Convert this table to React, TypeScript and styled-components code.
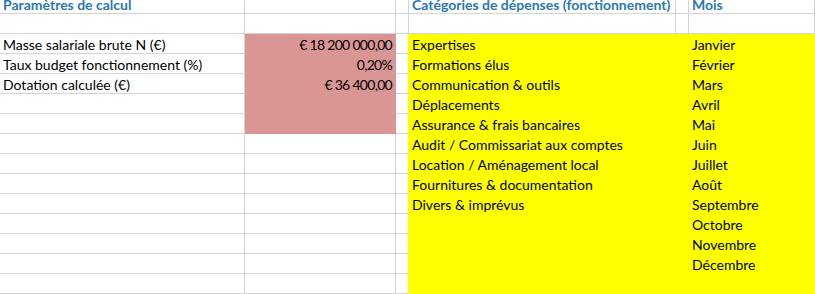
import styled, { createGlobalStyle } from "styled-components";

const GlobalStyle = createGlobalStyle`
  html, body {
    margin: 0;
    padding: 0;
    background: #fff;
    overflow: hidden;
  }
  body {
    font-family: Lato, "Open Sans", sans-serif;
    font-size: 14px;
    color: #000;
  }
`;

const PINK = "#DA9694";
const YELLOW = "#FFFF00";
const GRID = "#D4D4D4";

type Fill = "pink" | "yellow" | undefined;

const params = [
  ["Masse salariale brute N (€)", "€ 18 200 000,00"],
  ["Taux budget fonctionnement (%)", "0,20%"],
  ["Dotation calculée (€)", "€ 36 400,00"],
];

const categories = [
  "Expertises",
  "Formations élus",
  "Communication & outils",
  "Déplacements",
  "Assurance & frais bancaires",
  "Audit / Commissariat aux comptes",
  "Location / Aménagement local",
  "Fournitures & documentation",
  "Divers & imprévus",
];

const months = [
  "Janvier",
  "Février",
  "Mars",
  "Avril",
  "Mai",
  "Juin",
  "Juillet",
  "Août",
  "Septembre",
  "Octobre",
  "Novembre",
  "Décembre",
];

const App = () => {
  const rows = Array.from({ length: 13 }, (_, i) => i);

  return (
    <>
      <GlobalStyle />
      <Sheet>
        <Row>
          <Cell>
            <Heading>Paramètres de calcul</Heading>
          </Cell>
          <Cell />
          <Cell />
          <Cell>
            <Heading>Catégories de dépenses (fonctionnement)</Heading>
          </Cell>
          <Cell />
          <Cell>
            <Heading>Mois</Heading>
          </Cell>
        </Row>
        <Row>
          <Cell />
          <Cell />
          <Cell />
          <Cell />
          <Cell />
          <Cell />
        </Row>
        {rows.map((i) => (
          <Row key={i}>
            <Cell>{params[i]?.[0]}</Cell>
            <Cell $fill={i < 5 ? "pink" : undefined} $right>
              {params[i] && <Amount>{params[i][1]}</Amount>}
            </Cell>
            <Cell $gap />
            <Cell $fill="yellow">{categories[i]}</Cell>
            <Cell $fill="yellow" />
            <Cell $fill="yellow">{months[i]}</Cell>
          </Row>
        ))}
      </Sheet>
    </>
  );
};

export default App;

const Sheet = styled.div`
  margin-top: -6px;
  width: 815px;
  display: flex;
  flex-direction: column;
`;

const Row = styled.div`
  display: grid;
  grid-template-columns: 245px 151px 13px 267px 13px 1fr;
  height: 20px;
`;

const Cell = styled.div<{ $fill?: Fill; $right?: boolean; $gap?: boolean }>`
  box-sizing: border-box;
  height: 20px;
  padding: 0 3px;
  display: flex;
  align-items: flex-end;
  justify-content: ${({ $right }) => ($right ? "flex-end" : "flex-start")};
  white-space: nowrap;
  line-height: 16px;
  border-right: 1px solid ${GRID};
  border-bottom: 1px solid ${GRID};
  background: ${({ $fill }) =>
    $fill === "pink" ? PINK : $fill === "yellow" ? YELLOW : "#fff"};
  ${({ $fill }) =>
    $fill && `border-color: ${$fill === "pink" ? PINK : YELLOW};`}
  ${({ $gap }) => $gap && `border-right-color: ${YELLOW};`}
`;

const Amount = styled.span`
  letter-spacing: -0.7px;
`;

const Heading = styled.span`
  font-weight: 700;
  color: #2b78ac;
`;
